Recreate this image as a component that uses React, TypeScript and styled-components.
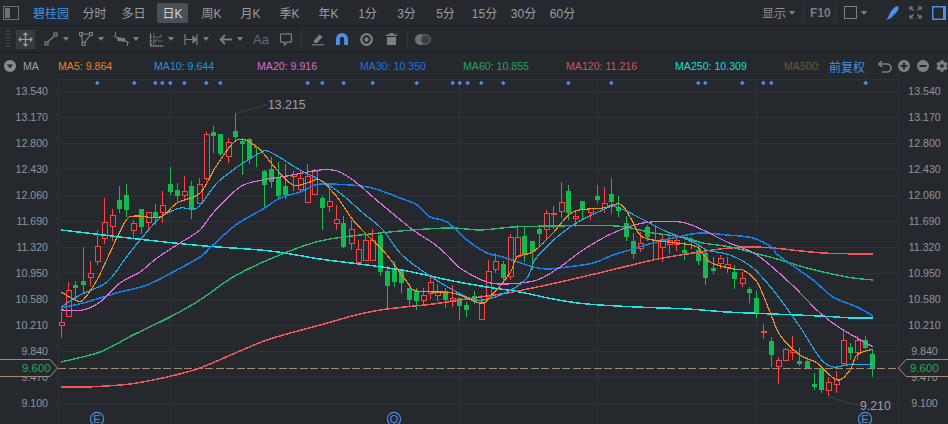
import React from "react";
import styled, { createGlobalStyle } from "styled-components";
import { FaCog } from "react-icons/fa";

const FONT = `"Liberation Sans", "Noto Sans CJK SC", sans-serif`;
const BG = "#25292e";
const GRID = "#2e3237";
const ICON = "#7b8086";
const BLUE = "#4a90e8";

const Global = createGlobalStyle`
  html, body { margin: 0; padding: 0; background: ${BG}; overflow: hidden; }
  #root { width: 948px; height: 424px; }
`;

const Page = styled.div`
  position: relative; width: 948px; height: 424px; overflow: hidden;
  background: ${BG}; font-family: ${FONT}; display: flex; flex-direction: column;
`;
const TopBar = styled.div`
  display: flex; align-items: center; height: 25px; flex: none;
  border-bottom: 1px solid #1a1d20; padding-left: 3px; box-sizing: content-box;
`;
const Stock = styled.span`
  color: #3f8fe9; font-size: 12px; margin-left: 14px; width: 42px; flex: none; white-space: nowrap;
`;
const Tab = styled.span<{ $active?: boolean }>`
  flex: none; width: ${p => (p.$active ? 31 : 39)}px; height: 20px; margin: 0 ${p => (p.$active ? 4 : 0)}px;
  display: flex; align-items: center; justify-content: center; border-radius: 2px;
  font-size: 12px; white-space: nowrap;
  color: ${p => (p.$active ? "#d4d7da" : "#9a9ea3")};
  background: ${p => (p.$active ? "#4a5056" : "transparent")};
`;
const RightGroup = styled.div`
  margin-left: auto; width: 186px; flex: none; display: flex; align-items: center; height: 100%;
`;
const ShowLabel = styled.span`color: #8d9196; font-size: 12px; white-space: nowrap;`;
const Caret = styled.i<{ $ml?: number }>`
  flex: none; width: 0; height: 0; display: block; margin-left: ${p => p.$ml ?? 0}px;
  border-left: 3.5px solid transparent; border-right: 3.5px solid transparent;
  border-top: 4px solid ${ICON};
`;
const BarSep = styled.i<{ $ml: number; $h?: number }>`
  flex: none; display: block; width: 1px; height: ${p => p.$h ?? 20}px; background: #33373c;
  margin-left: ${p => p.$ml}px;
`;
const F10 = styled.b`color: #777c82; font-size: 12px; margin-left: 6px; white-space: nowrap;`;
const Tool = styled.span<{ $ml: number; $w: number }>`
  flex: none; display: flex; align-items: center; justify-content: center;
  width: ${p => p.$w}px; margin-left: ${p => p.$ml}px;
`;
const ToolBar = styled.div`
  display: flex; align-items: center; height: 26px; flex: none; border-bottom: 1px solid #1a1d20;
`;
const Grip = styled.i`
  flex: none; display: block; width: 4px; height: 16px; margin-left: 6px;
  background: repeating-linear-gradient(to bottom, #474b50 0 1px, transparent 1px 3px);
`;
const MoveBox = styled.span`
  flex: none; display: flex; align-items: center; justify-content: center;
  width: 19px; height: 19px; margin-left: 6px; background: #363b41;
`;
const AaLabel = styled.span`
  flex: none; margin-left: 10px; width: 15px; color: #666b70; font-size: 13px; white-space: nowrap;
`;
const MaRow = styled.div`display: flex; align-items: center; height: 26px; flex: none;`;
const MaName = styled.span`color: #9ea2a7; font-size: 10.6px; margin-left: 7px; width: 35px; flex: none;`;
const MaItem = styled.span<{ $w: number; $c: string }>`
  flex: none; width: ${p => p.$w}px; color: ${p => p.$c}; font-size: 10.6px; white-space: nowrap;
`;
const Adjust = styled.span`flex: none; color: #3f8fe9; font-size: 12px; width: 49px; white-space: nowrap;`;
const Chart = styled.div`display: flex; flex: 1; min-height: 0;`;
const Axis = styled.div<{ $w: number; $side: "left" | "right" }>`
  flex: none; width: ${p => p.$w}px; box-sizing: border-box;
  display: flex; flex-direction: column; margin-top: -1px;
  color: #8f959c; font-size: 10.6px;
  text-align: ${p => (p.$side === "left" ? "right" : "center")};
  padding: ${p => (p.$side === "left" ? "0 10px 0 0" : "0 0 0 2px")};
`;
const AxisLabel = styled.span`flex: none; height: 26.03px; line-height: 26.03px;`;
const Plot = styled.svg`flex: none; display: block; width: 841px; height: 345px;`;
const PriceTag = styled.svg<{ $left: number }>`
  position: absolute; left: ${p => p.$left}px; top: 358px; display: block; width: 60px; height: 20px;
`;
const PriceText = styled.span<{ $left: number }>`
  position: absolute; left: ${p => p.$left}px; top: 362px; color: #17ae50; font-size: 11.5px; line-height: 13px;
`;

const Ico = ({ w, h, children }: { w: number; h: number; children: React.ReactNode }) => (
  <svg width={w} height={h} viewBox={`0 0 ${w} ${h}`} fill="none" stroke={ICON} strokeWidth={1.2} style={{ display: "block" }}>
    {children}
  </svg>
);

const tabs = ["分时", "多日", "日K", "周K", "月K", "季K", "年K", "1分", "3分", "5分", "15分", "30分", "60分"];
const mas: [string, number, string][] = [
  ["MA5: 9.864", 96, "#ef7f1e"],
  ["MA10: 9.644", 103, "#1a96d8"],
  ["MA20: 9.916", 103, "#d56ad6"],
  ["MA30: 10.350", 103, "#1c74de"],
  ["MA60: 10.855", 103, "#20a562"],
  ["MA120: 11.216", 109, "#d8514e"],
  ["MA250: 10.309", 109, "#18dcdc"],
  ["MA500:", 45, "#6a5a30"],
];
const prices = ["13.540", "13.170", "12.800", "12.430", "12.060", "11.690", "11.320", "10.950", "10.580", "10.210", "9.840", "9.470", "9.100"];
const diamonds = [97.3, 134.3, 155.3, 162.3, 170.3, 184.3, 206.3, 220.3, 307.7, 322.3, 343.7, 372.7, 416.7, 452.7, 459.7, 467.7, 481.3, 503.3, 568.3, 611.3, 698.3, 705.3, 742.3, 763.3, 771.3, 865.7];
const gridX = [170.5, 459.5, 597.5, 756.5];

// [up?, high, bodyTop, bodyBottom, low]
const candles: number[][] = [
  [1,312,322,325,338],[1,282,290,316,316],[0,281,285,288,300],[0,247,281,285,293],[1,261,273,277,286],[1,230,246,261,265],
  [1,198,222,238,244],[1,209,215,226,241],[0,186,200,209,213],[0,184,195,210,217],[1,220,223,230,238],[0,209,209,227,234],
  [1,212,212,222,231],[0,204,212,217,225],[1,191,205,212,223],[0,167,184,192,195],[0,183,190,196,203],[1,176,191,195,199],
  [0,181,186,210,219],[1,178,184,203,204],[1,132,134,178,181],[0,126,132,136,153],[0,134,134,154,156],[1,138,142,156,163],
  [0,113,131,137,141],[0,138,141,144,175],[0,138,139,159,164],[0,147,147,148,167],[0,170,171,185,208],[0,157,169,182,188],
  [0,162,178,196,200],[0,164,186,195,199],[1,171,174,176,191],[1,171,178,189,191],[1,164,176,202,202],[1,169,171,194,194],
  [0,196,198,208,230],[1,187,201,206,212],[1,205,219,223,230],[0,216,223,247,248],[1,220,229,243,250],[1,240,249,262,265],
  [1,235,240,260,261],[1,229,240,260,260],[0,233,235,272,276],[0,266,271,286,309],[0,261,269,282,287],[0,269,269,283,293],
  [0,288,288,300,307],[0,288,291,301,310],[1,288,295,300,304],[1,275,282,293,299],[1,284,291,295,301],[0,288,291,300,308],
  [1,285,298,300,307],[0,298,298,306,320],[0,302,305,310,317],[0,291,296,301,304],[1,295,302,319,319],[1,260,271,298,298],
  [1,253,261,269,273],[0,261,264,278,284],[1,234,237,276,280],[1,225,237,256,256],[0,226,236,255,262],[0,241,241,252,270],
  [0,225,229,234,247],[1,210,213,229,240],[1,206,213,214,229],[1,182,202,211,218],[0,185,191,213,220],[1,212,216,218,227],
  [0,201,201,210,220],[1,208,208,212,220],[0,185,196,200,203],[1,187,203,207,213],[0,178,194,202,214],[0,196,207,211,217],
  [0,216,223,237,241],[0,233,241,254,259],[1,232,243,248,252],[0,225,227,237,241],[1,225,240,259,260],[1,235,239,247,262],
  [1,234,240,244,254],[1,238,240,244,251],[0,242,250,253,260],[1,237,240,241,249],[0,246,250,261,265],[0,252,253,278,285],
  [0,257,268,271,274],[1,255,258,263,269],[1,257,264,267,273],[0,265,272,279,289],[1,272,278,283,287],[0,287,289,293,303],
  [0,291,298,313,318],[1,324,331,332,339],[0,337,341,355,367],[1,357,360,366,384],[1,348,349,360,360],[1,336,350,352,360],
  [0,348,361,364,366],[0,357,361,368,369],[0,373,384,387,390],[0,368,368,390,393],[1,377,382,390,396],[1,371,379,384,393],
  [1,331,340,363,366],[0,343,347,353,360],[1,336,340,352,360],[0,336,340,348,349],[0,350,354,368,377],
];
const candleX = (i: number) => Math.floor(61.5 + i * 7.24) + 0.5;

const lines: { c: string; w: number; p: number[] }[] = [
  { c: "#1fe6e6", w: 1.5, p: [61,230,87,233,120,237,165,242,205,246,270,251,320,259,367,265,407,271,453,281,487,287,520,292,553,299,587,304,637,307,688,309,727,312,773,314,820,316,853,318,873,318] },
  { c: "#ef5a58", w: 1.5, p: [61,387,87,387,130,384,167,377,200,368,240,351,270,339,320,325,360,314,387,309,433,304,480,297,513,292,560,282,603,272,653,260,687,254,720,249,747,247,773,248,823,253,873,254] },
  { c: "#27b870", w: 1.4, p: [61,362,100,352,133,335,170,317,200,300,233,277,270,259,320,241,380,233,447,228,480,230,513,227,553,226,617,226,653,233,683,237,703,243,730,247,777,259,807,268,847,277,873,280] },
  { c: "#1480ee", w: 1.5, p: [61,308,83,303,100,298,120,292,147,285,173,272,200,257,213,245,237,224,263,209,280,198,300,192,315,185,330,184,368,187,400,198,417,205,430,217,447,222,467,240,487,253,503,257,533,267,547,269,567,267,593,263,613,255,633,249,653,243,673,238,700,233,727,235,753,238,773,248,778,255,813,280,833,297,857,307,873,316] },
  { c: "#e070e0", w: 1.2, p: [61,310,83,310,100,302,120,283,140,272,157,258,180,243,200,230,213,213,240,187,263,180,287,176,320,170,337,171,353,180,380,203,413,230,433,243,447,255,460,268,487,282,507,284,537,280,560,267,583,250,613,233,643,223,680,222,703,230,727,242,757,255,790,283,820,313,840,328,873,347] },
  { c: "#22a8e8", w: 1.2, p: [61,307,80,295,107,282,125,259,140,240,160,218,180,208,197,208,217,183,240,165,260,153,270,152,300,170,320,180,340,193,363,213,383,230,402,255,433,278,467,297,483,300,507,292,527,278,537,257,570,227,607,208,617,207,640,218,663,230,693,242,707,250,730,255,753,268,777,295,800,327,820,358,833,367,847,365,873,364] },
  { c: "#f59020", w: 1.2, p: [61,292,75,300,83,300,97,280,107,259,125,222,135,216,160,217,177,203,200,193,217,165,237,140,257,147,277,170,293,185,307,183,320,180,337,197,353,220,370,238,387,255,407,282,417,291,453,293,480,303,490,297,510,273,517,257,533,252,553,233,573,212,603,208,620,204,630,217,640,235,653,240,677,243,697,247,710,262,733,269,743,270,757,282,770,312,780,335,800,355,817,363,837,380,850,370,857,355,873,349] },
];

const smooth = (p: number[]) => {
  const pts: [number, number][] = [];
  for (let i = 0; i < p.length; i += 2) pts.push([p[i], p[i + 1]]);
  let d = `M${pts[0][0]} ${pts[0][1]}`;
  for (let i = 0; i < pts.length - 1; i++) {
    const a = pts[Math.max(i - 1, 0)], b = pts[i], c = pts[i + 1], e = pts[Math.min(i + 2, pts.length - 1)];
    d += `C${b[0] + (c[0] - a[0]) / 6} ${b[1] + (c[1] - a[1]) / 6} ${c[0] - (e[0] - b[0]) / 6} ${c[1] - (e[1] - b[1]) / 6} ${c[0]} ${c[1]}`;
  }
  return d;
};

const Marker = ({ x, label }: { x: number; label: string }) => (
  <g>
    <circle cx={x} cy={419} r={6.6} fill="none" stroke={BLUE} strokeWidth={1.1} />
    <text x={x} y={423} textAnchor="middle" fontSize={11} fill={BLUE} fontFamily="Liberation Sans">{label}</text>
  </g>
);

export default function App() {
  return (
    <Page>
      <Global />
      <TopBar>
        <svg width="16" height="14" viewBox="0 0 16 14" style={{ display: "block", flex: "none" }}>
          <rect x="0.5" y="0.5" width="15" height="13" fill="none" stroke="#6d7177" />
          <rect x="2" y="2" width="5" height="10" fill="#6d7177" />
        </svg>
        <Stock>碧桂园</Stock>
        {tabs.map(t => <Tab key={t} $active={t === "日K"}>{t}</Tab>)}
        <RightGroup>
          <ShowLabel>显示</ShowLabel>
          <Caret $ml={3} />
          <BarSep $ml={8} />
          <F10>F10</F10>
          <BarSep $ml={4} />
          <Tool $ml={8} $w={13}>
            <svg width="13" height="13" viewBox="0 0 13 13" style={{ display: "block" }}><rect x="0.5" y="0.5" width="12" height="12" fill="none" stroke="#7b8086" /></svg>
          </Tool>
          <Caret $ml={4} />
          <Tool $ml={18} $w={14}>
            <svg width="14" height="14" viewBox="0 0 14 14" style={{ display: "block" }}>
              <path d="M0.5 13.3C3 12.8 3.5 10 4.5 8C5.5 5.5 8 2 11 0.5C12.5 -0.2 14 1 13.5 2.5C13 5 10.5 8 8.2 9.3C7 12 4 14 0.5 13.3Z" fill={BLUE} />
            </svg>
          </Tool>
          <Tool $ml={10} $w={13}>
            <Ico w={13} h={13}>
              <path d="M1 4V1H4M1 1L4.5 4.5M9 1H12V4M12 1L8.5 4.5M1 9V12H4M1 12L4.5 8.5M12 9V12H9M12 12L8.5 8.5" />
            </Ico>
          </Tool>
          <Tool $ml={10} $w={14}>
            <svg width="14" height="14" viewBox="0 0 14 14" style={{ display: "block" }}>
              <rect x="0.75" y="0.75" width="20" height="12.5" fill="none" stroke={BLUE} strokeWidth="1.5" />
              <rect x="11" y="1" width="4" height="12" fill={BLUE} />
            </svg>
          </Tool>
        </RightGroup>
      </TopBar>

      <ToolBar>
        <Grip />
        <MoveBox>
          <Ico w={15} h={15}>
            <path d="M7.5 1V14M1 7.5H14M5.5 3L7.5 1L9.5 3M5.5 12L7.5 14L9.5 12M3 5.5L1 7.5L3 9.5M12 5.5L14 7.5L12 9.5" stroke="#9a9ea3" />
          </Ico>
        </MoveBox>
        <Tool $ml={9} $w={14}>
          <Ico w={14} h={14}><rect x="1" y="10" width="3" height="3" /><rect x="10" y="1" width="3" height="3" /><path d="M3.5 10L10.5 4" /></Ico>
        </Tool>
        <Caret $ml={5} />
        <Tool $ml={10} $w={14}>
          <Ico w={14} h={14}><rect x="0.5" y="0.5" width="3" height="3" /><rect x="10.5" y="0.5" width="3" height="3" /><rect x="3" y="10.5" width="3" height="3" /><path d="M3.5 2H10.5M11 3.5L5.5 10.5M2 3.5L4 10.5" /></Ico>
        </Tool>
        <Caret $ml={5} />
        <Tool $ml={9} $w={17}>
          <Ico w={17} h={14}><path d="M1 3.5L6 7L10 7.5L16 11" /><rect x="5" y="6" width="2.5" height="2.5" fill={ICON} /><rect x="9" y="6.5" width="2.5" height="2.5" fill={ICON} /><path d="M2.5 0V3M14.5 11V14" strokeWidth="1" /></Ico>
        </Tool>
        <Caret $ml={3} />
        <Tool $ml={10} $w={15}>
          <Ico w={15} h={15}><path d="M1.5 1V14H14.5M1.5 5H14M1.5 9H14M2 13L13 2M5 1V14" strokeWidth="1" strokeDasharray="1.5 1" /><path d="M1.5 1V14H14.5" /></Ico>
        </Tool>
        <Caret $ml={4} />
        <Tool $ml={10} $w={14}>
          <Ico w={14} h={13}><path d="M1 1V12M13 1V12M1 6.5H12" /><path d="M9 3.5L12.5 6.5L9 9.5Z" fill={ICON} /></Ico>
        </Tool>
        <Caret $ml={5} />
        <Tool $ml={10} $w={13}>
          <Ico w={13} h={11}><path d="M13 5.5H2" strokeWidth="1.8" /><path d="M6 1L1.5 5.5L6 10" strokeWidth="1.8" /></Ico>
        </Tool>
        <Caret $ml={5} />
        <AaLabel>Aa</AaLabel>
        <Tool $ml={12} $w={12}>
          <Ico w={12} h={13}><path d="M1.5 0.8H10.5A1 1 0 0 1 11.5 1.8V8.2A1 1 0 0 1 10.5 9.2H7L4.5 12V9.2H1.5A1 1 0 0 1 0.5 8.2V1.8A1 1 0 0 1 1.5 0.8Z" strokeWidth="1.3" /></Ico>
        </Tool>
        <BarSep $ml={9} />
        <Tool $ml={10} $w={12}>
          <Ico w={12} h={13}><path d="M1.5 8L7.5 1.5L10.5 4L5 10H3Z" fill={ICON} stroke="none" /><path d="M0 11.8H12" /></Ico>
        </Tool>
        <Tool $ml={12} $w={12}>
          <svg width="12" height="12" viewBox="0 0 12 12" style={{ display: "block" }}>
            <path d="M0 12V6A6 6 0 0 1 12 6V12H8.2V6A2.2 2.2 0 0 0 3.8 6V12Z" fill={BLUE} />
          </svg>
        </Tool>
        <Tool $ml={12} $w={13}>
          <Ico w={13} h={13}><circle cx="6.5" cy="6.5" r="5.3" strokeWidth="2.2" /><circle cx="6.5" cy="6.5" r="2.2" fill={ICON} stroke="none" /></Ico>
        </Tool>
        <Tool $ml={13} $w={11}>
          <svg width="11" height="12" viewBox="0 0 11 12" style={{ display: "block" }}>
            <path d="M3.5 0H7.5V1.5H11V3H0V1.5H3.5ZM1 4H10V12H1Z" fill={ICON} />
          </svg>
        </Tool>
        <BarSep $ml={10} />
        <Tool $ml={7} $w={16}>
          <svg width="16" height="11" viewBox="0 0 16 11" style={{ display: "block" }}>
            <circle cx="5.5" cy="5.5" r="5.5" fill="#6d7277" />
            <circle cx="10.5" cy="5.5" r="4.8" fill="#3a3e43" stroke="#6d7277" />
          </svg>
        </Tool>
      </ToolBar>

      <MaRow>
        <Tool $ml={4} $w={12}>
          <svg width="12" height="12" viewBox="0 0 12 12" style={{ display: "block" }}>
            <circle cx="6" cy="6" r="6" fill="#858a90" /><path d="M3 4.5H9L6 8.5Z" fill={BG} />
          </svg>
        </Tool>
        <MaName>MA</MaName>
        {mas.map(([t, w, c]) => <MaItem key={t} $w={w} $c={c}>{t}</MaItem>)}
        <Adjust>前复权</Adjust>
        <Tool $ml={0} $w={14}>
          <Ico w={14} h={13}><path d="M4 1L1 4L4 7M1.5 4H9A4 4 0 0 1 9 12H4" strokeWidth="1.7" /></Ico>
        </Tool>
        <Tool $ml={6} $w={12}>
          <svg width="12" height="12" viewBox="0 0 12 12" style={{ display: "block" }}>
            <circle cx="6" cy="6" r="6" fill={ICON} /><path d="M2.5 5H5V2.5H7V5H9.5V7H7V9.5H5V7H2.5Z" fill={BG} />
          </svg>
        </Tool>
        <Tool $ml={7} $w={12}>
          <svg width="12" height="12" viewBox="0 0 12 12" style={{ display: "block" }}>
            <circle cx="6" cy="6" r="6" fill={ICON} /><rect x="2.5" y="5" width="7" height="2" fill={BG} />
          </svg>
        </Tool>
        <Tool $ml={7} $w={12}><FaCog size={12} color={ICON} /></Tool>
      </MaRow>

      <Chart>
        <Axis $w={58} $side="left">{prices.map(p => <AxisLabel key={p}>{p}</AxisLabel>)}</Axis>
        <Plot viewBox="58 79 841 345">
          <g stroke={GRID} strokeWidth={1} shapeRendering="crispEdges">
            <path d="M58 79.5H899M58.5 79V424M898.5 79V424" />
            {prices.map((_, i) => {
              const y = Math.round(91 + i * 26.03) + 0.5;
              return <path key={i} d={`M58 ${y}H899`} />;
            })}
            {gridX.map(x => <path key={x} d={`M${x} 79V424`} />)}
          </g>
          {diamonds.map(x => (
            <path key={x} d={`M${x} 80.7L${x + 2.3} 83L${x} 85.3L${x - 2.3} 83Z`} fill={BLUE} />
          ))}
          <path d="M58 368.5H899" stroke="#a08c70" strokeWidth={1} strokeDasharray="8 2.5" shapeRendering="crispEdges" />
          {candles.map(([up, hi, top, bot, lo], i) => {
            const x = candleX(i);
            const color = up ? "#fb4343" : "#12bb50";
            return (
              <g key={i} shapeRendering="crispEdges">
                <path d={`M${x} ${hi}V${top}M${x} ${bot}V${lo}`} stroke={color} strokeWidth={1} />
                {up
                  ? <rect x={x - 2.5} y={top + 0.5} width={5} height={Math.max(bot - top, 1)} fill={BG} stroke={color} strokeWidth={1} />
                  : <rect x={x - 2.5} y={top} width={5} height={Math.max(bot - top, 1)} fill={color} />}
              </g>
            );
          })}
          {lines.map(l => (
            <path key={l.c} d={smooth(l.p)} fill="none" stroke={l.c} strokeWidth={l.w} shapeRendering="crispEdges" />
          ))}
          <path d="M235.5 113.5L267 104.5M829 397L860 406" stroke="#3d4146" strokeWidth={1} fill="none" />
          <text x={268} y={108.5} fontSize={12.3} fill="#9aa0a6" fontFamily="Liberation Sans">13.215</text>
          <text x={860} y={410} fontSize={12.3} fill="#9aa0a6" fontFamily="Liberation Sans">9.210</text>
          <Marker x={97} label="E" />
          <Marker x={394} label="Q" />
          <Marker x={865} label="E" />
        </Plot>
        <Axis $w={49} $side="right">{prices.map(p => <AxisLabel key={p}>{p}</AxisLabel>)}</Axis>
      </Chart>

      <PriceTag $left={-2} viewBox="0 0 60 20">
        <path d="M0 1.5H52L59.5 10L52 18.5H0Z" fill={BG} stroke="#a08c70" strokeWidth={1} />
      </PriceTag>
      <PriceText $left={22}>9.600</PriceText>
      <PriceTag $left={898} viewBox="0 0 60 20">
        <path d="M60 1.5H8L0.5 10L8 18.5H60Z" fill={BG} stroke="#a08c70" strokeWidth={1} />
      </PriceTag>
      <PriceText $left={910}>9.600</PriceText>
    </Page>
  );
}
